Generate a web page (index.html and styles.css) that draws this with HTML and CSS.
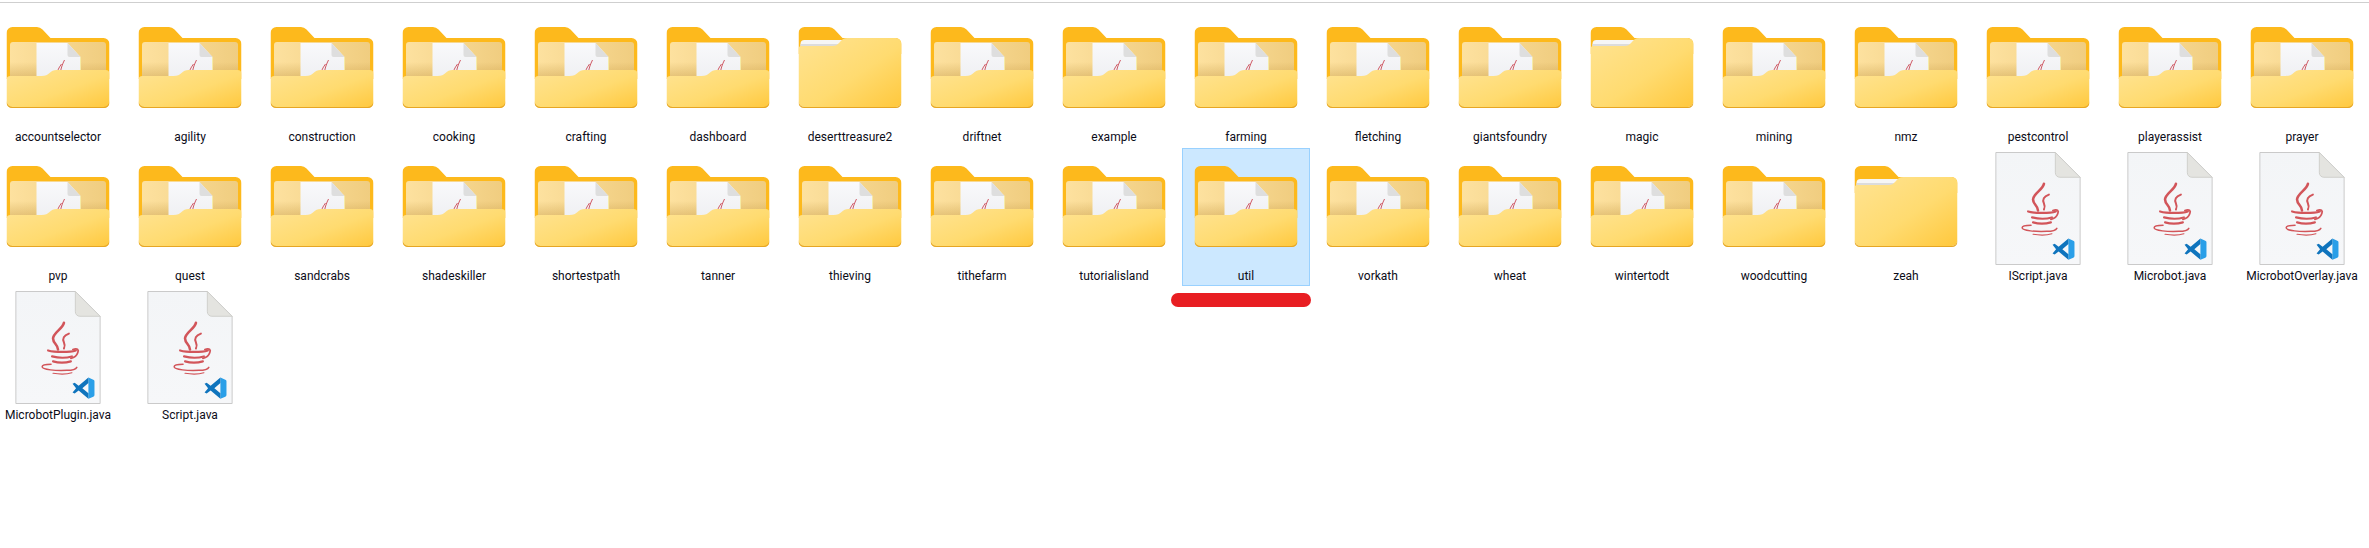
FILE: index.html
```html
<!DOCTYPE html>
<html lang="en">
<head>
<meta charset="utf-8">
<title>microbot</title>
<link rel="stylesheet" href="styles.css">
</head>
<body>
<svg class="defs" width="0" height="0" aria-hidden="true">
  <defs>
    <linearGradient id="gFront" x1="0" y1="0" x2="1" y2="1"><stop offset="0" stop-color="#ffe392"/><stop offset="0.55" stop-color="#ffdb70"/><stop offset="1" stop-color="#ffc83d"/></linearGradient>
    <linearGradient id="gInner" x1="0" y1="0" x2="1" y2="0"><stop offset="0" stop-color="#fde19f"/><stop offset="1" stop-color="#f0cd80"/></linearGradient>
    <linearGradient id="gShade" x1="0" y1="0" x2="0" y2="1"><stop offset="0" stop-color="#b98a30" stop-opacity="0"/><stop offset="1" stop-color="#b98a30" stop-opacity=".35"/></linearGradient>
    <linearGradient id="gDoc" x1="0" y1="0" x2="0" y2="1"><stop offset="0" stop-color="#f9f9fb"/><stop offset="1" stop-color="#eeeff2"/></linearGradient>
    <linearGradient id="gFile" x1="0" y1="0" x2="0" y2="1"><stop offset="0" stop-color="#f3f5f7"/><stop offset="1" stop-color="#f6f7f9"/></linearGradient>
    <symbol id="folder-doc" viewBox="0 0 103 81">
      <path d="M0 6a6 6 0 0 1 6-6h24a8 8 0 0 1 6 2.500l8 8.500h53a6 6 0 0 1 6 6v35H0z" fill="#fdb91c"/>
      <rect x="3.500" y="15" width="96" height="40" rx="3" fill="url(#gInner)"/>
      <rect x="3.500" y="35" width="96" height="15" fill="url(#gShade)"/>
      <path d="M30 16h31l13 14v24H30z" fill="url(#gDoc)"/>
      <path d="M74 30v22" stroke="#f5eba8" stroke-width="1"/>
      <path d="M61 16l13 14H63a2 2 0 0 1-2-2z" fill="#dedede"/>
      <path d="M51 45c.500-3 2-5 4-8M54 45c.500-4 2-8 4-12" fill="none" stroke="#cf5a66" stroke-width="1"/>
      <path d="M0 53a4 4 0 0 1 4-4h31c4 0 6-1 8-3 2-2 4-3 7-3h49a4 4 0 0 1 4 4v28a6 6 0 0 1-6 6H6a6 6 0 0 1-6-6z" fill="url(#gFront)"/>
      <path d="M0 74a6 6 0 0 0 6 6h91a6 6 0 0 0 6-6v1.500a5.500 5.500 0 0 1-5.500 5.500H5.500A5.500 5.500 0 0 1 0 75.500z" fill="#e6a624"/>
    </symbol>
    <symbol id="folder-plain" viewBox="0 0 103 81">
      <path d="M0 6a6 6 0 0 1 6-6h24a8 8 0 0 1 6 2.500l8 8.500h53a6 6 0 0 1 6 6v10H0z" fill="#fdb91c"/>
      <path d="M2 17a4 4 0 0 1 4-4h40l-5 7H2z" fill="#f6f6f6"/>
      <path d="M2 17h41l-2 3H2z" fill="#dcdcdc"/>
      <path d="M0 22a3 3 0 0 1 3-3h31c3 0 5-1 7-3.500S45 11 49 11h48a6 6 0 0 1 6 6v57a6 6 0 0 1-6 6H6a6 6 0 0 1-6-6z" fill="url(#gFront)"/>
      <path d="M0 74a6 6 0 0 0 6 6h91a6 6 0 0 0 6-6v1.500a5.500 5.500 0 0 1-5.500 5.500H5.500A5.500 5.500 0 0 1 0 75.500z" fill="#e6a624"/>
    </symbol>
    <symbol id="java-file" viewBox="0 0 86 114">
      <path d="M.5.500h60l25 25v88H.5z" fill="url(#gFile)" stroke="#c9c9c9"/>
      <path d="M60.500.500l25 25H65a4.500 4.500 0 0 1-4.500-4.500z" fill="#e4e4e0" stroke="#cfcfcb"/>
      <g fill="none" stroke="#d2555a" stroke-linecap="round">
        <path d="M49 32c-1 6-11 10-11 16 0 5 5 6 5 11" stroke-width="2.600"/>
        <path d="M54 43c-5 2-7 5-5 9 1 2 1 4 0 6" stroke-width="2"/>
        <path d="M33 60c7 2 22 2 28 0M37 66c6 1.500 15 1.500 20 0M38 71c5 1.500 13 1.500 18 0" stroke-width="2.200"/>
        <path d="M58 59c5-2 6 1 5 3-1 3-3 5-7 6" stroke-width="1.800"/>
        <path d="M36 74c-5 0-9 1-9 2.500 0 3 14 4 25 3.500 6 0 9-1 10-3" stroke-width="1.500"/>
        <path d="M38 83c6 1 14 1 19-.5" stroke-width="1.200"/>
      </g>
      <g transform="translate(57 87) scale(.235 .22)">
        <path d="M71 1 92 11q5 2 5 7v64q0 5-5 7L71 99z" fill="#2a9fe8"/>
        <path d="M71 1 29 39 12 25 3 30 18 50 3 70 12 75 29 61 71 99V73L45 50 71 27z" fill="#0f74bd"/>
      </g>
    </symbol>
  </defs>
</svg>

<main class="grid">
  <div class="tile"><svg class="folder"><use href="#folder-doc"/></svg><span class="name">accountselector</span></div>
  <div class="tile"><svg class="folder"><use href="#folder-doc"/></svg><span class="name">agility</span></div>
  <div class="tile"><svg class="folder"><use href="#folder-doc"/></svg><span class="name">construction</span></div>
  <div class="tile"><svg class="folder"><use href="#folder-doc"/></svg><span class="name">cooking</span></div>
  <div class="tile"><svg class="folder"><use href="#folder-doc"/></svg><span class="name">crafting</span></div>
  <div class="tile"><svg class="folder"><use href="#folder-doc"/></svg><span class="name">dashboard</span></div>
  <div class="tile"><svg class="folder"><use href="#folder-plain"/></svg><span class="name">deserttreasure2</span></div>
  <div class="tile"><svg class="folder"><use href="#folder-doc"/></svg><span class="name">driftnet</span></div>
  <div class="tile"><svg class="folder"><use href="#folder-doc"/></svg><span class="name">example</span></div>
  <div class="tile"><svg class="folder"><use href="#folder-doc"/></svg><span class="name">farming</span></div>
  <div class="tile"><svg class="folder"><use href="#folder-doc"/></svg><span class="name">fletching</span></div>
  <div class="tile"><svg class="folder"><use href="#folder-doc"/></svg><span class="name">giantsfoundry</span></div>
  <div class="tile"><svg class="folder"><use href="#folder-plain"/></svg><span class="name">magic</span></div>
  <div class="tile"><svg class="folder"><use href="#folder-doc"/></svg><span class="name">mining</span></div>
  <div class="tile"><svg class="folder"><use href="#folder-doc"/></svg><span class="name">nmz</span></div>
  <div class="tile"><svg class="folder"><use href="#folder-doc"/></svg><span class="name">pestcontrol</span></div>
  <div class="tile"><svg class="folder"><use href="#folder-doc"/></svg><span class="name">playerassist</span></div>
  <div class="tile"><svg class="folder"><use href="#folder-doc"/></svg><span class="name">prayer</span></div>

  <div class="tile"><svg class="folder"><use href="#folder-doc"/></svg><span class="name">pvp</span></div>
  <div class="tile"><svg class="folder"><use href="#folder-doc"/></svg><span class="name">quest</span></div>
  <div class="tile"><svg class="folder"><use href="#folder-doc"/></svg><span class="name">sandcrabs</span></div>
  <div class="tile"><svg class="folder"><use href="#folder-doc"/></svg><span class="name">shadeskiller</span></div>
  <div class="tile"><svg class="folder"><use href="#folder-doc"/></svg><span class="name">shortestpath</span></div>
  <div class="tile"><svg class="folder"><use href="#folder-doc"/></svg><span class="name">tanner</span></div>
  <div class="tile"><svg class="folder"><use href="#folder-doc"/></svg><span class="name">thieving</span></div>
  <div class="tile"><svg class="folder"><use href="#folder-doc"/></svg><span class="name">tithefarm</span></div>
  <div class="tile"><svg class="folder"><use href="#folder-doc"/></svg><span class="name">tutorialisland</span></div>
  <div class="tile selected"><svg class="folder"><use href="#folder-doc"/></svg><span class="name">util</span><i class="redbar"></i></div>
  <div class="tile"><svg class="folder"><use href="#folder-doc"/></svg><span class="name">vorkath</span></div>
  <div class="tile"><svg class="folder"><use href="#folder-doc"/></svg><span class="name">wheat</span></div>
  <div class="tile"><svg class="folder"><use href="#folder-doc"/></svg><span class="name">wintertodt</span></div>
  <div class="tile"><svg class="folder"><use href="#folder-doc"/></svg><span class="name">woodcutting</span></div>
  <div class="tile"><svg class="folder"><use href="#folder-plain"/></svg><span class="name">zeah</span></div>
  <div class="tile file"><svg class="java"><use href="#java-file"/></svg><span class="name">IScript.java</span></div>
  <div class="tile file"><svg class="java"><use href="#java-file"/></svg><span class="name">Microbot.java</span></div>
  <div class="tile file"><svg class="java"><use href="#java-file"/></svg><span class="name">MicrobotOverlay.java</span></div>

  <div class="tile file"><svg class="java"><use href="#java-file"/></svg><span class="name">MicrobotPlugin.java</span></div>
  <div class="tile file"><svg class="java"><use href="#java-file"/></svg><span class="name">Script.java</span></div>
</main>
</body>
</html>
```
FILE: styles.css
```css
html, body {
  margin: 0;
  padding: 0;
  background: #fff;
}
body {
  height: 548px;
  overflow: hidden;
  border-top: 2px solid #fff;
  box-sizing: border-box;
  font-family: Roboto, "Open Sans", sans-serif;
  font-size: 12px;
  color: #0c0c18;
}
body::before {
  content: "";
  display: block;
  height: 1px;
  background: #cfcfcf;
}
.defs {
  position: absolute;
}
.grid {
  display: grid;
  grid-template-columns: repeat(18, 128px);
  grid-auto-rows: 138px;
  column-gap: 4px;
  row-gap: 1px;
  margin: 6px 0 0 -6px;
}
.tile {
  position: relative;
  display: flex;
  flex-direction: column;
  align-items: center;
  box-sizing: border-box;
  border: 1px solid transparent;
  padding: 17px 0 0 0;
}
.tile.file {
  padding-top: 3px;
}
.folder {
  display: block;
  width: 103px;
  height: 81px;
  margin-bottom: 20px;
  transform: translateX(-0.5px);
}
.java {
  display: block;
  width: 86px;
  height: 114px;
  margin-bottom: 2px;
}
.name {
  line-height: 18px;
  white-space: nowrap;
}
.selected {
  background: #cce8ff;
  border-color: #99d1ff;
}
.redbar {
  position: absolute;
  left: -12px;
  top: 144px;
  width: 140px;
  height: 14px;
  border-radius: 7px;
  background: #e81e22;
}
```
